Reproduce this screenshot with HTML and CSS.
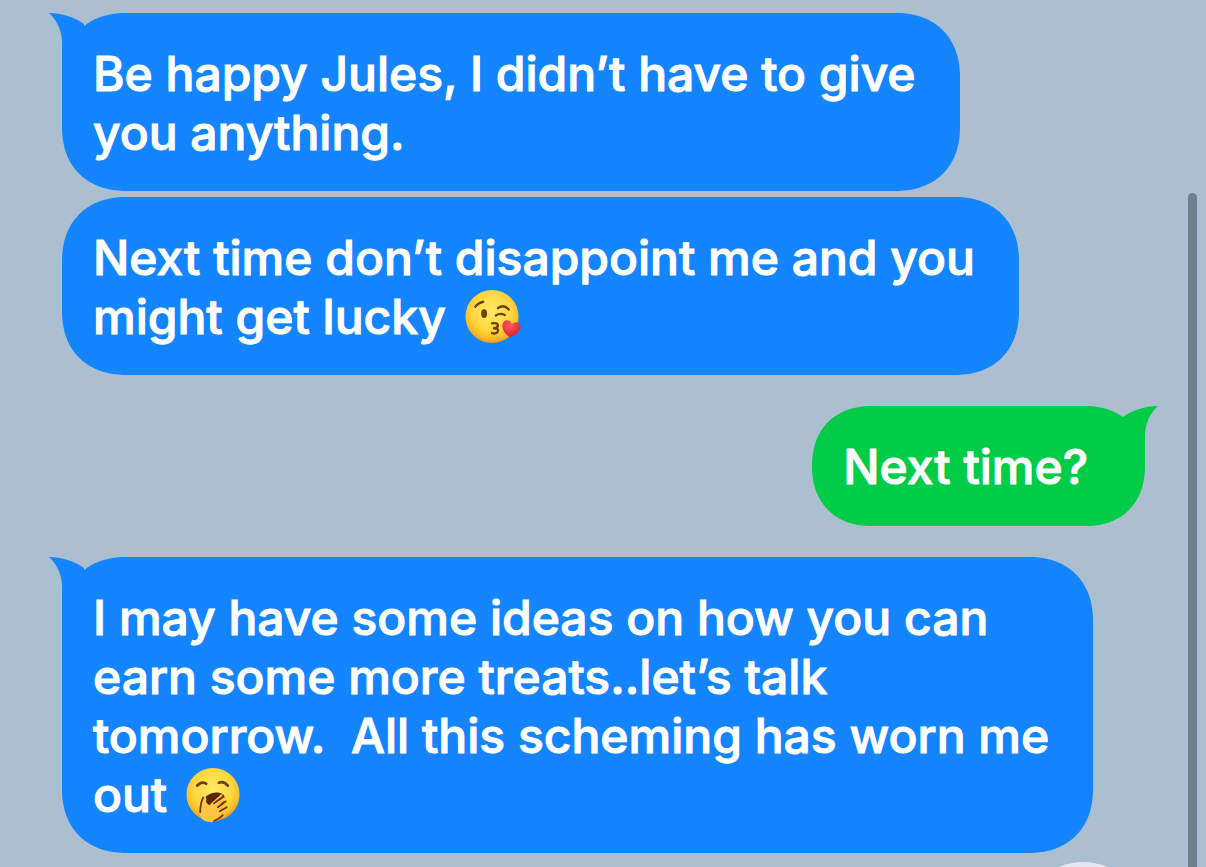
FILE: index.html
```html
<!DOCTYPE html>
<html lang="en">
<head>
<meta charset="utf-8">
<title>Messages</title>
<link rel="stylesheet" href="styles.css">
</head>
<body>
<main class="chat">
  <section class="group received">
    <p class="bubble">
      <svg class="tail" viewBox="0 0 35 70" aria-hidden="true"><path d="M0 0C13 0 25 4 35 11V70H13V30C13 18 8 7 0 0Z"/></svg>
      Be happy Jules, I didn’t have to give<br>you anything.
    </p>
    <p class="bubble">
      Next time don’t disappoint me and you<br>might get lucky
      <svg class="emoji" viewBox="0 0 60 60" role="img" aria-label="Face blowing a kiss">
        <defs>
          <radialGradient id="face" cx="50%" cy="40%" r="60%"><stop offset="0" stop-color="#ffe86a"/><stop offset=".6" stop-color="#ffd83e"/><stop offset=".85" stop-color="#fbbd28"/><stop offset="1" stop-color="#ee9d1a"/></radialGradient>
          <radialGradient id="heart" cx="40%" cy="30%" r="70%"><stop offset="0" stop-color="#ff5a5e"/><stop offset="1" stop-color="#dc1f2d"/></radialGradient>
        </defs>
        <circle cx="30" cy="30" r="27" fill="url(#face)"/>
        <g fill="none" stroke="#71400c" stroke-width="2.4" stroke-linecap="round" stroke-linejoin="round">
          <path d="M13 20Q16 16 21 15"/>
          <path d="M36 21.500Q42 17 47 23"/>
          <path d="M34 29Q38 26 43 28.500"/>
          <path d="M30 37Q36 36 36 39T32 42Q37 42 36 45T30 47"/>
        </g>
        <ellipse cx="22" cy="27" rx="3" ry="4.500" fill="#71400c"/>
        <path d="M48 51C43 48 39 42 41 37C43 32 49 33 50 38C54 34 60 36 59 41C58 46 53 50 48 51Z" fill="url(#heart)"/>
      </svg>
    </p>
  </section>
  <section class="group sent">
    <p class="bubble">
      <svg class="tail" viewBox="0 0 35 70" aria-hidden="true"><path d="M35 0C22 0 10 4 0 11V60H22V30C22 18 27 7 35 0Z"/></svg>
      Next time?
    </p>
  </section>
  <section class="group received">
    <p class="bubble">
      <svg class="tail" viewBox="0 0 35 70" aria-hidden="true"><path d="M0 0C13 0 25 4 35 11V70H13V30C13 18 8 7 0 0Z"/></svg>
      I may have some ideas on how you can<br>earn some more treats..let’s talk<br>tomorrow.&nbsp; All this scheming has worn me<br>out
      <svg class="emoji" viewBox="0 0 60 60" role="img" aria-label="Yawning face">
        <circle cx="30" cy="30" r="27" fill="url(#face)"/>
        <g fill="none" stroke="#71400c" stroke-width="2.800" stroke-linecap="round">
          <path d="M14 21Q18 16 23 19"/>
          <path d="M36 18Q41 16 45 21"/>
        </g>
        <path d="M18 44C17 26 42 24 42 34L38 49L24 49Z" fill="#572707"/>
        <path d="M17 52C16 45 17 36 21 32Q24 31 23 38L26 41L38 30Q41 29 39 33L32 39L41 33Q45 32 43 35L36 41L43 37Q46 37 44 40L38 45L43 43Q46 44 42 49C37 54 33 58 28 58Q20 58 17 52Z" fill="#ffc542"/>
        <path d="M31 39L39 33M35 43L43 37M37 47L44 43M40 51Q36 55 31 57M17 48Q17 39 20 33" fill="none" stroke="#6f3708" stroke-width="1.800" stroke-linecap="round"/>
      </svg>
    </p>
  </section>
  <div class="scrollbar" aria-hidden="true"></div>
  <button class="jump" type="button" aria-label="Scroll to latest message"></button>
</main>
</body>
</html>
```
FILE: styles.css
```css
* {
  box-sizing: border-box;
}

body {
  margin: 0;
  background: #abbfd0;
  font-family: Inter, "Liberation Sans", sans-serif;
}

.chat {
  position: relative;
  display: flex;
  flex-direction: column;
  gap: 31px;
  min-height: 100vh;
  padding: 13px 61px 14px 62px;
  overflow: hidden;
}

.group {
  display: flex;
  flex-direction: column;
  gap: 6px;
  align-items: flex-start;
}

.sent {
  align-items: flex-end;
}

.bubble {
  position: relative;
  margin: 0;
  padding: 31px 44px 29px 31px;
  border-radius: 56px;
  background: #1485ff;
  color: #fff;
  font-size: 48px;
  font-weight: 500;
  line-height: 59px;
  -webkit-text-stroke: 1px #fff;
}

.sent .bubble {
  padding: 31px 57px 30px 31px;
  background: #00cc47;
}

@supports (corner-shape: superellipse(1.15)) {
  .bubble {
    border-radius: 64px;
    corner-shape: superellipse(1.15);
  }
}

.tail {
  position: absolute;
  top: 0;
  left: -13px;
  width: 35px;
  height: 70px;
  fill: #1485ff;
}

.sent .tail {
  right: -13px;
  left: auto;
  fill: #00cc47;
}

.emoji {
  width: 60px;
  height: 59px;
  margin-left: 3px;
  vertical-align: top;
}

.scrollbar {
  position: absolute;
  top: 193px;
  right: 9px;
  bottom: -9px;
  width: 9px;
  border-radius: 5px;
  background: #6f7f8b;
}

.jump {
  position: absolute;
  right: 63px;
  bottom: -115px;
  width: 120px;
  height: 120px;
  padding: 0;
  border: 0;
  border-radius: 50%;
  background: #e6e6ee;
}
```
